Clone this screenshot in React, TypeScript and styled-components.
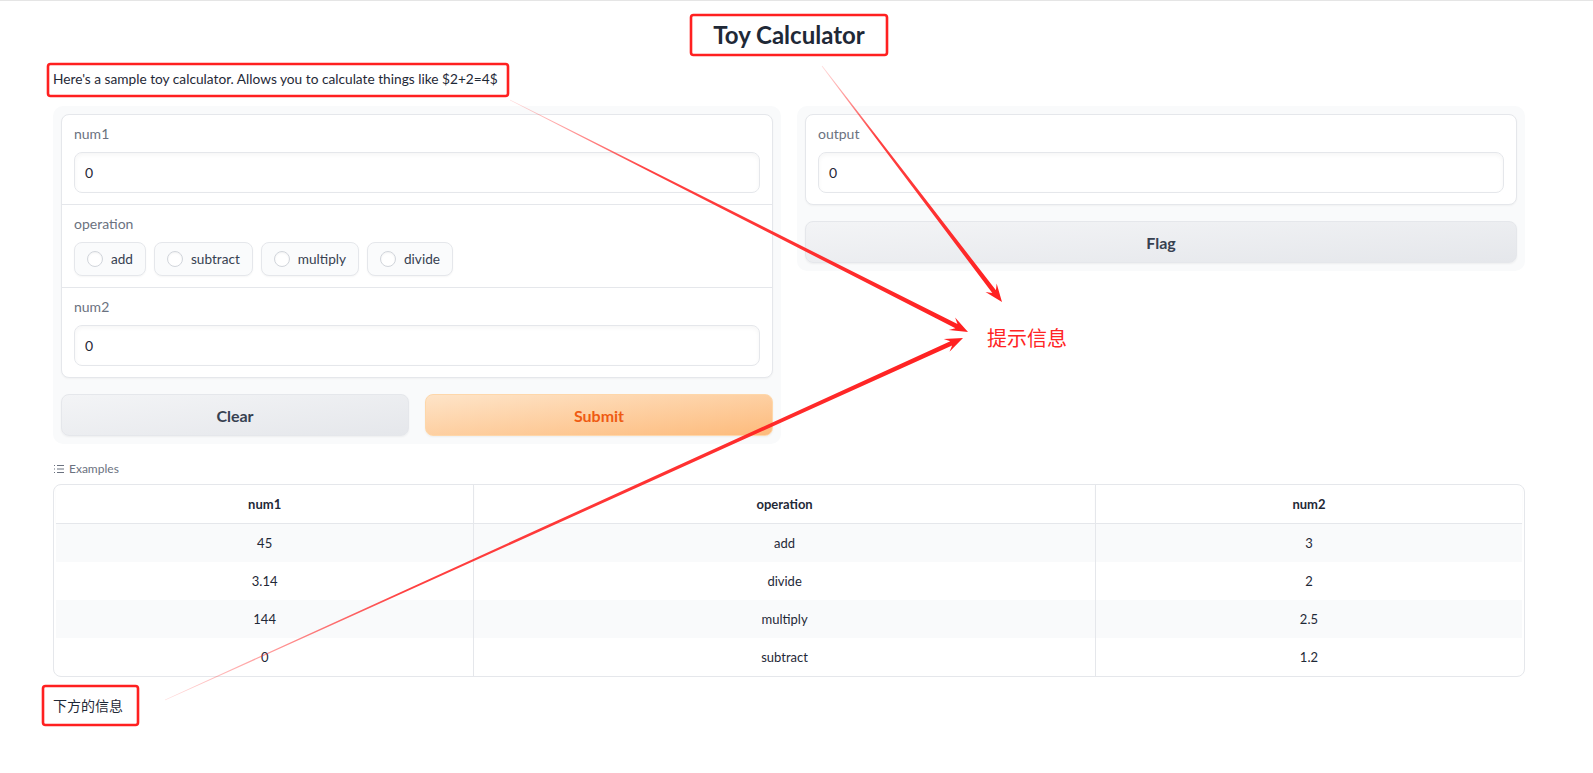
import React from 'react';
import styled, { createGlobalStyle } from 'styled-components';

const GlobalStyle = createGlobalStyle`
  html, body { margin: 0; padding: 0; background: #ffffff; }
  body { font-family: Lato, "Noto Sans CJK SC", sans-serif; color: #1f2937; }
  * { box-sizing: border-box; }
`;

const Page = styled.div`
  position: relative;
  width: 1593px;
  height: 773px;
  overflow: hidden;
  box-shadow: inset 0 1px 0 #e5e5e5;
  padding: 19px 0 0 53px;
`;

const Content = styled.div`
  width: 1472px;
  display: flex;
  flex-direction: column;
`;

const Title = styled.h1`
  margin: 0;
  text-align: center;
  font-size: 24px;
  line-height: 32px;
  font-weight: 700;
  color: #1f2937;
`;

const Description = styled.p`
  margin: 18px 0 0;
  font-size: 13.7px;
  line-height: 20px;
  color: #1f2937;
`;

const Columns = styled.div`
  margin-top: 17px;
  display: grid;
  grid-template-columns: 1fr 1fr;
  gap: 16px;
  align-items: start;
`;

const Panel = styled.div`
  background: #f9fafb;
  border-radius: 10px;
  padding: 8px;
  display: flex;
  flex-direction: column;
  gap: 16px;
`;

const Form = styled.div`
  background: #ffffff;
  border: 1px solid #e5e7eb;
  border-radius: 8px;
  box-shadow: 0 1px 2px rgba(0, 0, 0, 0.04);
  overflow: hidden;
`;

const Field = styled.div`
  padding: 11px 12px 11px;
  & + & {
    border-top: 1px solid #e5e7eb;
  }
`;

const Label = styled.div`
  font-size: 14px;
  line-height: 16px;
  color: #6b7280;
  margin-bottom: 10px;
`;

const Input = styled.div`
  height: 41px;
  border: 1px solid #e5e7eb;
  border-radius: 8px;
  background: #ffffff;
  box-shadow: inset 0 2px 4px rgba(0, 0, 0, 0.04);
  display: flex;
  align-items: center;
  padding: 0 10px;
  font-size: 14px;
  color: #1f2937;
`;

const RadioGroup = styled.div`
  display: flex;
  gap: 8px;
`;

const RadioPill = styled.label`
  height: 34px;
  display: flex;
  align-items: center;
  gap: 8px;
  padding: 0 12px;
  border: 1px solid #e5e7eb;
  border-radius: 8px;
  background: #fafbfc;
  box-shadow: 0 1px 2px rgba(0, 0, 0, 0.04);
  font-size: 13.6px;
  color: #374151;
`;

const RadioDot = styled.span`
  width: 16px;
  height: 16px;
  border-radius: 50%;
  border: 1px solid #d1d5db;
  background: #ffffff;
  box-shadow: inset 0 1px 2px rgba(0, 0, 0, 0.05);
`;

const ButtonRow = styled.div`
  display: grid;
  grid-template-columns: 1fr 1fr;
  gap: 16px;
`;

const Button = styled.button<{ $primary?: boolean }>`
  height: 42px;
  border-radius: 8px;
  font-family: Lato, sans-serif;
  font-size: 16px;
  font-weight: 700;
  border: 1px solid ${(p) => (p.$primary ? '#fed7aa' : '#e5e7eb')};
  background: ${(p) =>
    p.$primary
      ? 'linear-gradient(to bottom right, #fee4c8, #fdbb7c)'
      : 'linear-gradient(to bottom right, #f3f4f6, #e5e7eb)'};
  color: ${(p) => (p.$primary ? '#ef5b12' : '#374151')};
  box-shadow: 0 1px 2px rgba(0, 0, 0, 0.05);
`;

const ExamplesLabel = styled.div`
  margin-top: 17px;
  display: flex;
  align-items: center;
  gap: 5px;
  font-size: 12px;
  line-height: 16px;
  color: #6b7280;
  padding-left: 1px;
`;

const TableWrap = styled.div`
  margin-top: 7px;
  border: 1px solid #e5e7eb;
  border-radius: 8px;
  overflow: hidden;
  padding: 0 2px;
`;

const Table = styled.table`
  width: 100%;
  border-collapse: collapse;
  table-layout: fixed;
  font-size: 13px;
  color: #1f2937;
`;

const Col = styled.col<{ $w: string }>`
  width: ${(p) => p.$w};
`;

const Th = styled.th`
  font-weight: 700;
  line-height: 20px;
  padding: 9px;
  text-align: center;
  border-bottom: 1px solid #e5e7eb;
  box-shadow: 0 1px 2px rgba(0, 0, 0, 0.03);
  & + & {
    border-left: 1px solid #e5e7eb;
  }
`;

const Tr = styled.tr`
  &:nth-child(odd) {
    background: #f9fafb;
  }
`;

const Td = styled.td`
  line-height: 20px;
  padding: 9px;
  text-align: center;
  & + & {
    border-left: 1px solid #e5e7eb;
  }
`;

const Footer = styled.p`
  margin: 18px 0 0;
  font-size: 14px;
  line-height: 20px;
  color: #1f2937;
  font-family: "Noto Sans CJK SC", sans-serif;
`;

const Overlay = styled.svg`
  position: absolute;
  left: 0;
  top: 0;
  width: 1593px;
  height: 773px;
  pointer-events: none;
`;

const Note = styled.div`
  position: absolute;
  left: 987px;
  top: 324px;
  font-family: "Noto Sans CJK SC", sans-serif;
  font-size: 20px;
  line-height: 28px;
  color: #ff2424;
`;

function arrowPath(x0: number, y0: number, x1: number, y1: number) {
  const w0 = 0.8;
  const w1 = 4.6;
  const headLen = 18;
  const headW = 14;
  const dx = x1 - x0;
  const dy = y1 - y0;
  const len = Math.hypot(dx, dy);
  const ux = dx / len;
  const uy = dy / len;
  const nx = -uy;
  const ny = ux;
  const bx = x1 - ux * headLen * 0.72;
  const by = y1 - uy * headLen * 0.72;
  const hx = x1 - ux * headLen;
  const hy = y1 - uy * headLen;
  const pts = [
    [x0 + (nx * w0) / 2, y0 + (ny * w0) / 2],
    [bx + (nx * w1) / 2, by + (ny * w1) / 2],
    [hx + (nx * headW) / 2, hy + (ny * headW) / 2],
    [x1, y1],
    [hx - (nx * headW) / 2, hy - (ny * headW) / 2],
    [bx - (nx * w1) / 2, by - (ny * w1) / 2],
    [x0 - (nx * w0) / 2, y0 - (ny * w0) / 2],
  ];
  return 'M' + pts.map((p) => `${p[0].toFixed(2)} ${p[1].toFixed(2)}`).join(' L') + ' Z';
}

const arrows = [
  { id: 'a1', x0: 822, y0: 66, x1: 1002, y1: 302 },
  { id: 'a2', x0: 510, y0: 100, x1: 968, y1: 332 },
  { id: 'a3', x0: 165, y0: 700, x1: 963, y1: 338 },
];

const ListIcon = () => (
  <svg width="10" height="10" viewBox="0 0 10 10" fill="none" stroke="#6b7280" strokeWidth="1">
    <line x1="3" y1="1.5" x2="10" y2="1.5" />
    <line x1="3" y1="5" x2="10" y2="5" />
    <line x1="3" y1="8.5" x2="10" y2="8.5" />
    <line x1="0" y1="1.5" x2="1" y2="1.5" />
    <line x1="0" y1="5" x2="1" y2="5" />
    <line x1="0" y1="8.5" x2="1" y2="8.5" />
  </svg>
);

const examples = [
  ['45', 'add', '3'],
  ['3.14', 'divide', '2'],
  ['144', 'multiply', '2.5'],
  ['0', 'subtract', '1.2'],
];

export default function App() {
  return (
    <>
      <GlobalStyle />
      <Page>
        <Content>
          <Title>Toy Calculator</Title>
          <Description>Here's a sample toy calculator. Allows you to calculate things like $2+2=4$</Description>
          <Columns>
            <Panel>
              <Form>
                <Field>
                  <Label>num1</Label>
                  <Input>0</Input>
                </Field>
                <Field>
                  <Label>operation</Label>
                  <RadioGroup>
                    {['add', 'subtract', 'multiply', 'divide'].map((op) => (
                      <RadioPill key={op}>
                        <RadioDot />
                        {op}
                      </RadioPill>
                    ))}
                  </RadioGroup>
                </Field>
                <Field>
                  <Label>num2</Label>
                  <Input>0</Input>
                </Field>
              </Form>
              <ButtonRow>
                <Button>Clear</Button>
                <Button $primary>Submit</Button>
              </ButtonRow>
            </Panel>
            <Panel>
              <Form>
                <Field>
                  <Label>output</Label>
                  <Input>0</Input>
                </Field>
              </Form>
              <Button>Flag</Button>
            </Panel>
          </Columns>
          <ExamplesLabel>
            <ListIcon />
            Examples
          </ExamplesLabel>
          <TableWrap>
            <Table>
              <colgroup>
                <Col $w="28.5%" />
                <Col $w="42.4%" />
                <Col $w="29.1%" />
              </colgroup>
              <thead>
                <tr>
                  <Th>num1</Th>
                  <Th>operation</Th>
                  <Th>num2</Th>
                </tr>
              </thead>
              <tbody>
                {examples.map((r, i) => (
                  <Tr key={i}>
                    {r.map((c, j) => (
                      <Td key={j}>{c}</Td>
                    ))}
                  </Tr>
                ))}
              </tbody>
            </Table>
          </TableWrap>
          <Footer>下方的信息</Footer>
        </Content>
        <Overlay viewBox="0 0 1593 773">
          <defs>
            {arrows.map((a) => (
              <linearGradient key={a.id} id={a.id} gradientUnits="userSpaceOnUse" x1={a.x0} y1={a.y0} x2={a.x1} y2={a.y1}>
                <stop offset="0" stopColor="#ff2020" stopOpacity="0.15" />
                <stop offset="0.3" stopColor="#ff2020" stopOpacity="0.85" />
                <stop offset="1" stopColor="#ff2020" stopOpacity="1" />
              </linearGradient>
            ))}
          </defs>
          <rect x="691" y="15" width="196" height="40" rx="2.5" fill="none" stroke="#ff2020" strokeWidth="2.6" />
          <rect x="48" y="64" width="460" height="32" rx="2.5" fill="none" stroke="#ff2020" strokeWidth="2.6" />
          <rect x="43" y="686" width="95" height="39" rx="2.5" fill="none" stroke="#ff2020" strokeWidth="2.6" />
          {arrows.map((a) => (
            <path key={a.id} d={arrowPath(a.x0, a.y0, a.x1, a.y1)} fill={`url(#${a.id})`} />
          ))}
        </Overlay>
        <Note>提示信息</Note>
      </Page>
    </>
  );
}
